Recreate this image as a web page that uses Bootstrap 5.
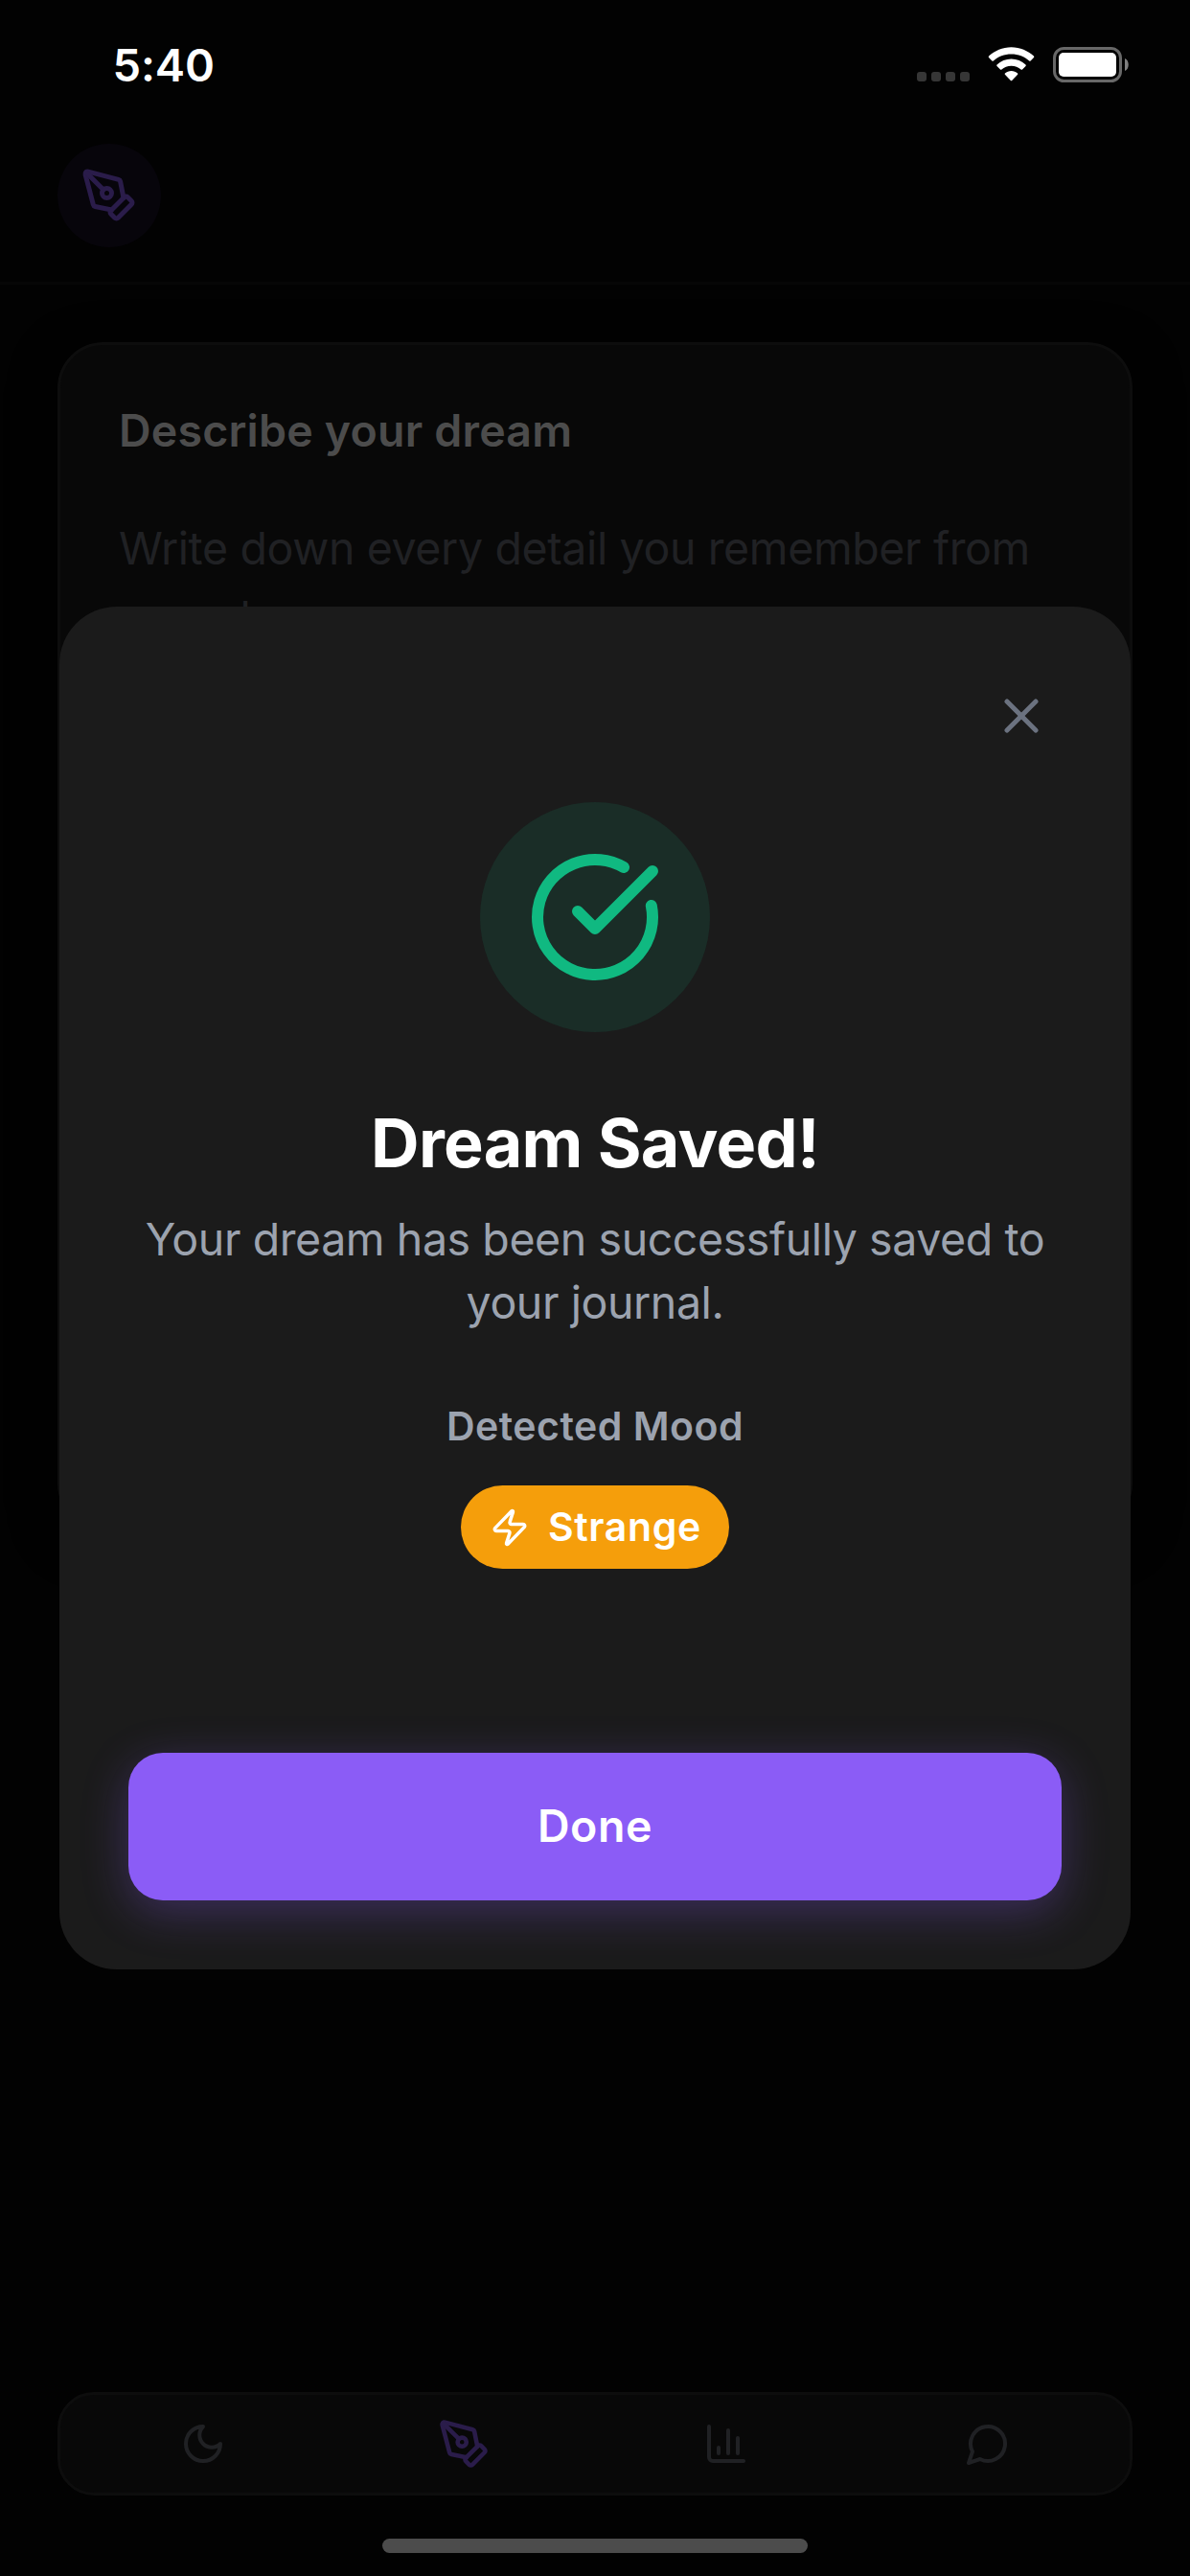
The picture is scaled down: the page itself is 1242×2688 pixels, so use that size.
<!DOCTYPE html>
<html lang="en">
<head>
<meta charset="utf-8">
<meta name="viewport" content="width=device-width, initial-scale=1">
<title>Dream Journal</title>
<link href="https://cdn.jsdelivr.net/npm/bootstrap@5.3.0/dist/css/bootstrap.min.css" rel="stylesheet">
<style>
  body { background: #020202; font-family: Inter, "Liberation Sans", sans-serif; overflow: hidden; }
  .screen { width: 1242px; height: 2688px; }
  svg { display: block; flex: none; }
  .line-icon { fill: none; stroke: currentColor; stroke-width: 2; stroke-linecap: round; stroke-linejoin: round; }

  .status-bar { height: 132px; padding: 0 63px 0 117.5px; }
  .clock { font-size: 47px; font-weight: 600; line-height: 60px; letter-spacing: -.1px; color: #fff; margin-top: 38px; }
  .status-icons { margin-top: 49px; height: 37px; }
  .signal-dots { gap: 5px; margin: 0 19px 1px 0; }
  .signal-dots i { width: 10px; height: 10px; border-radius: 3px; background: #363636; }
  .wifi-icon { margin-right: 19px; }

  .app-header { padding: 18px 60px 36px; border-bottom: 3px solid #060606; }
  .logo-circle { width: 108px; height: 108px; background: #07050b; }
  .accent-dim { color: #2a1c4a; }
  .muted-dim { color: #202124; }

  .app-main { padding: 60px 60px 0; }
  .entry-card { height: 1239px; padding: 59px 60px; background: #080808; border: 3px solid #0d0d0d; border-radius: 48px; box-shadow: 0 12px 48px rgba(0, 0, 0, .5); }
  .entry-title { font-size: 46.5px; font-weight: 600; line-height: 60px; letter-spacing: .2px; color: #4c4c4c; margin: 0 0 57px 1px; }
  .entry-hint { font-size: 46.5px; line-height: 72px; letter-spacing: -.375px; margin: 0 0 0 1px; }

  .tab-bar { height: 108px; margin: 0 60px; padding: 0 12px; background: #080808; border: 3px solid #0d0d0d; border-radius: 38px; }
  .home-indicator { width: 444px; height: 15px; margin: 45px auto 24px; border-radius: 8px; background: #4c4c4c; }

  .sheet { width: 1118px; padding: 72px; background: #1b1b1b; border-radius: 60px; }
  .close-btn { width: 84px; height: 84px; color: #6b7280; }
  .success-circle { width: 240px; height: 240px; margin-top: 48px; background: #1a2d27; color: #10b981; }
  .sheet-title { font-size: 70px; font-weight: 700; line-height: 91px; letter-spacing: -.7px; color: #fff; margin: 70px 0 22px; }
  .sheet-text { font-size: 46.5px; line-height: 66px; letter-spacing: -.42px; color: #9ca3af; margin: 0; }
  .mood-label { font-size: 41px; font-weight: 600; line-height: 48px; letter-spacing: .5px; color: #9ca3af; margin-top: 72px; }
  .mood-pill { height: 87px; width: 280px; margin-top: 38px; padding-left: 30px; gap: 19px; background: #f59e0b; color: #fff; font-size: 41px; font-weight: 600; letter-spacing: .6px; }
  .done-btn, .done-btn:hover { height: 154px; margin-top: 192px; border: 0; border-radius: 36px; background: #8b5cf6; color: #fff; font-size: 46.5px; font-weight: 600; letter-spacing: .55px; box-shadow: 0 12px 48px rgba(139, 92, 246, .3); }
</style>
</head>
<body>
<div class="screen position-relative d-flex flex-column">
  <div class="status-bar d-flex justify-content-between align-items-start">
    <div class="clock">5:40</div>
    <div class="status-icons d-flex align-items-end">
      <div class="signal-dots d-flex"><i></i><i></i><i></i><i></i></div>
      <svg width="49" height="37" viewBox="0 0 49 37" class="wifi-icon" fill="#fff">
        <path d="M24.5 0.2C33.600 0.200 41.900 3.800 48 9.600Q48.700 10.300 48 11L44.600 14.500Q43.900 15.200 43.200 14.500C38.300 9.900 31.700 7.500 24.500 7.500S10.700 9.900 5.800 14.500Q5.100 15.200 4.400 14.500L1 11Q.3 10.300 1 9.600C7.100 3.800 15.400.2 24.500.2Z"/>
        <path d="M24.500 12.600C30.200 12.600 35.500 14.800 39.500 18.500Q40.200 19.200 39.500 19.900L36 23.500Q35.300 24.200 34.600 23.500C31.900 21.100 28.400 19.700 24.500 19.700S17.100 21.100 14.400 23.500Q13.700 24.200 13 23.500L9.500 19.900Q8.800 19.200 9.500 18.500C13.500 14.800 18.800 12.600 24.500 12.600Z"/>
        <path d="M24.500 25C27 25 29.300 25.900 31.100 27.400Q31.700 28 31.100 28.700L25.200 34.900Q24.500 35.600 23.800 34.900L17.900 28.700Q17.300 28 17.900 27.400C19.700 25.900 22 25 24.500 25Z"/>
      </svg>
      <svg width="80" height="37" viewBox="0 0 80 37">
        <rect x="1.500" y="1.500" width="69" height="34" rx="10" fill="none" stroke="#686868" stroke-width="3"/>
        <rect x="6" y="6" width="60" height="25" rx="5" fill="#fff"/>
        <path d="M75 12C80 14 80 23 75 25Z" fill="#808080"/>
      </svg>
    </div>
  </div>

  <header class="app-header">
    <div class="logo-circle accent-dim rounded-circle d-flex align-items-center justify-content-center">
      <svg class="line-icon" width="60" height="60" viewBox="0 0 24 24"><path d="M15.707 21.293a1 1 0 0 1-1.414 0l-1.586-1.586a1 1 0 0 1 0-1.414l5.586-5.586a1 1 0 0 1 1.414 0l1.586 1.586a1 1 0 0 1 0 1.414z"/><path d="m18 13-1.375-6.874a1 1 0 0 0-.746-.776L3.235 2.028a1 1 0 0 0-1.207 1.207L5.35 15.879a1 1 0 0 0 .776.746L13 18"/><path d="m2.300 2.300 7.286 7.286"/><circle cx="11" cy="11" r="2"/></svg>
    </div>
  </header>

  <main class="app-main flex-grow-1">
    <section class="entry-card">
      <h2 class="entry-title">Describe your dream</h2>
      <p class="entry-hint muted-dim">Write down every detail you remember from<br>your dream...</p>
    </section>
  </main>

  <nav class="tab-bar d-flex align-items-center muted-dim">
    <div class="flex-fill d-flex justify-content-center w-25">
      <svg class="line-icon" width="48" height="48" viewBox="0 0 24 24"><path d="M12 3a6 6 0 0 0 9 9 9 9 0 1 1-9-9Z"/></svg>
    </div>
    <div class="flex-fill d-flex justify-content-center w-25 accent-dim">
      <svg class="line-icon" width="55" height="55" viewBox="0 0 24 24"><path d="M15.707 21.293a1 1 0 0 1-1.414 0l-1.586-1.586a1 1 0 0 1 0-1.414l5.586-5.586a1 1 0 0 1 1.414 0l1.586 1.586a1 1 0 0 1 0 1.414z"/><path d="m18 13-1.375-6.874a1 1 0 0 0-.746-.776L3.235 2.028a1 1 0 0 0-1.207 1.207L5.35 15.879a1 1 0 0 0 .776.746L13 18"/><path d="m2.300 2.300 7.286 7.286"/><circle cx="11" cy="11" r="2"/></svg>
    </div>
    <div class="flex-fill d-flex justify-content-center w-25">
      <svg class="line-icon" width="48" height="48" viewBox="0 0 24 24"><path d="M3 3v16a2 2 0 0 0 2 2h16"/><path d="M18 17V9"/><path d="M13 17V5"/><path d="M8 17v-3"/></svg>
    </div>
    <div class="flex-fill d-flex justify-content-center w-25">
      <svg class="line-icon" width="48" height="48" viewBox="0 0 24 24"><path d="M7.900 20A9 9 0 1 0 4 16.100L2 22Z"/></svg>
    </div>
  </nav>
  <div class="home-indicator"></div>

  <!-- Confirmation dialog over the dimmed screen -->
  <div class="position-absolute top-0 start-0 w-100 h-100 d-flex align-items-center justify-content-center">
    <div class="sheet d-flex flex-column align-items-center text-center" role="dialog" aria-modal="true">
      <div class="close-btn align-self-end d-flex align-items-center justify-content-center">
        <svg class="line-icon" width="60" height="60" viewBox="0 0 24 24"><path d="M18 6 6 18"/><path d="m6 6 12 12"/></svg>
      </div>
      <div class="success-circle rounded-circle d-flex align-items-center justify-content-center">
        <svg class="line-icon" width="144" height="144" viewBox="0 0 24 24"><path d="M21.801 10A10 10 0 1 1 17 3.335"/><path d="m9 11 3 3L22 4"/></svg>
      </div>
      <h1 class="sheet-title">Dream Saved!</h1>
      <p class="sheet-text">Your dream has been successfully saved to<br>your journal.</p>
      <div class="mood-label">Detected Mood</div>
      <div class="mood-pill rounded-pill d-flex align-items-center">
        <svg class="line-icon" width="42" height="42" viewBox="0 0 24 24"><path d="M4 14a1 1 0 0 1-.78-1.630l9.900-10.200a.5.5 0 0 1 .86.46l-1.920 6.020A1 1 0 0 0 13 10h7a1 1 0 0 1 .78 1.630l-9.900 10.200a.5.5 0 0 1-.86-.46l1.920-6.020A1 1 0 0 0 11 14z"/></svg>
        <span>Strange</span>
      </div>
      <button type="button" class="done-btn btn w-100">Done</button>
    </div>
  </div>
</div>
<script src="https://cdn.jsdelivr.net/npm/bootstrap@5.3.0/dist/js/bootstrap.bundle.min.js"></script>
</body>
</html>
